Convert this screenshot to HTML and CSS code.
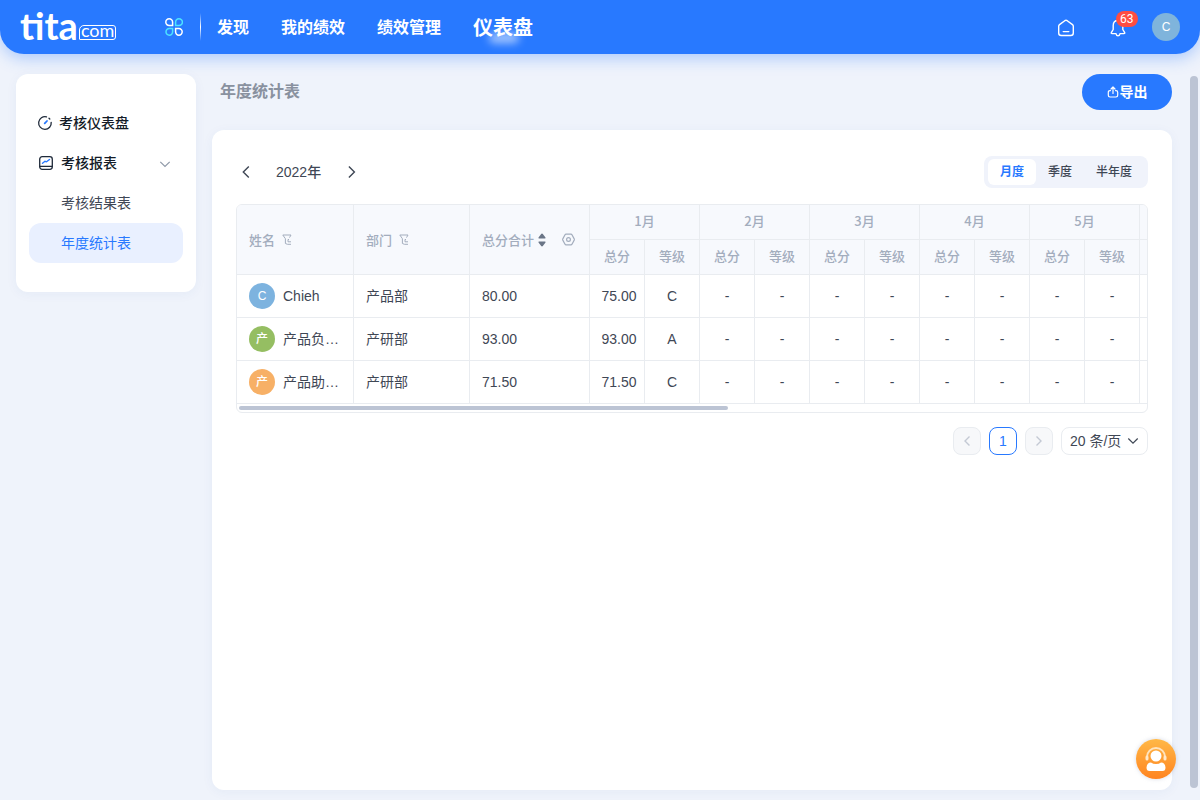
FILE: index.html
```html
<!DOCTYPE html>
<html lang="zh-CN">
<head>
<meta charset="utf-8">
<meta name="viewport" content="width=device-width, initial-scale=1">
<title>年度统计表</title>
<link rel="stylesheet" href="styles.css">
</head>
<body>
<header class="topbar">
  <a class="logo" href="#"><span class="logo-name">tita</span><span class="logo-suffix">com</span></a>
  <button class="icon-button apps" aria-label="应用">
    <svg width="18" height="18" viewBox="0 0 18 18" fill="none" stroke-width="1.5">
      <path stroke="#fff" d="M7.6 7.6H4.3A3.4 3.4 0 1 1 7.6 4.2z"/>
      <path stroke="#4de3ff" d="M10.6 7.6V4.3A3.4 3.4 0 1 1 14 7.600z"/>
      <path stroke="#4de3ff" d="M7.6 10.6v3.2A3.3 3.3 0 1 1 4.3 10.6z"/>
      <path stroke="#fff" d="M10.6 10.6h3.2a3.3 3.3 0 1 1-3.2 3.2z"/>
    </svg>
  </button>
  <span class="divider"></span>
  <nav class="nav">
    <a href="#">发现</a>
    <a href="#">我的绩效</a>
    <a href="#">绩效管理</a>
    <a class="current" href="#">仪表盘</a>
  </nav>
  <div class="tools">
    <button class="icon-button" aria-label="首页">
      <svg width="18" height="18" viewBox="0 0 18 18" fill="none" stroke="#fff" stroke-width="1.4" stroke-linecap="round" stroke-linejoin="round"><path d="M1.7 7.2Q1.7 6.2 2.5 5.6L7.8 1.7Q9 .9 10.2 1.7L15.500 5.600Q16.300 6.200 16.300 7.200V14Q16.300 16.500 13.800 16.500H4.200Q1.700 16.500 1.700 14zM6.200 12.600H11.800"/></svg>
    </button>
    <button class="icon-button bell" aria-label="通知">
      <svg width="18" height="18" viewBox="0 0 18 18" fill="none" stroke="#fff" stroke-width="1.4" stroke-linecap="round" stroke-linejoin="round"><path d="M9 1.500C5.800 1.500 4.200 3.900 4.200 6.500V10.500L2.300 13.700Q2 14.600 3 14.600H7Q7.300 16.700 9 16.700T11 14.600H15Q16 14.600 15.700 13.700L13.800 10.500V6.500C13.800 3.900 12.200 1.500 9 1.500z"/></svg>
      <span class="badge">63</span>
    </button>
    <button class="avatar avatar-user" aria-label="C">C</button>
  </div>
</header>

<div class="layout">
  <aside class="sidebar">
    <a class="side-item" href="#">
      <svg width="16" height="16" viewBox="0 0 16 16" fill="none" stroke="#1f2a3a" stroke-width="1.3" stroke-linecap="round"><path d="M9.500 1.900A6.300 6.300 0 1 0 14.200 7.300M12 3.200l.8.800"/><path stroke="#2879ff" stroke-width="1.800" d="M7.700 8.400L10 6"/></svg>
      考核仪表盘
    </a>
    <a class="side-item report" href="#">
      <svg width="16" height="16" viewBox="0 0 16 16" fill="none" stroke="#1f2a3a" stroke-width="1.300" stroke-linecap="round"><rect x="1.700" y="1.700" width="12.600" height="12.600" rx="2.500"/><path d="M2 11.300H14"/><path stroke="#2879ff" stroke-width="1.400" d="M4.500 8.300L7 6.300L8.500 6.800L11.500 4.500"/></svg>
      <span class="side-label">考核报表</span>
      <svg class="fold" width="12" height="12" viewBox="0 0 12 12" fill="none" stroke="#8f99a8" stroke-width="1.200"><path d="M1.300 4.800L6 9.500L10.700 4.800"/></svg>
    </a>
    <a class="side-item sub" href="#">考核结果表</a>
    <a class="side-item sub active" href="#">年度统计表</a>
  </aside>

  <main class="main">
    <div class="page-head">
      <h1>年度统计表</h1>
      <button class="export">
        <svg width="12" height="12" viewBox="0 0 12 12" fill="none" stroke="#fff" stroke-width="1.200" stroke-linecap="round" stroke-linejoin="round"><path d="M3.500 4.600H3Q1.300 4.600 1.300 6.300V9.300Q1.300 11 3 11H9Q10.700 11 10.700 9.300V6.300Q10.700 4.600 9 4.600H8.500M6 7.500V1.300M4 3L6 1L8 3"/></svg>导出
      </button>
    </div>

    <section class="card">
      <div class="controls">
        <div class="year">
          <button class="icon-button" aria-label="上一年"><svg width="12" height="16" viewBox="0 0 12 16" fill="none" stroke="#3f4755" stroke-width="1.400"><path d="M8.800 2.500L3.300 8L8.800 13.500"/></svg></button>
          <span>2022年</span>
          <button class="icon-button" aria-label="下一年"><svg width="12" height="16" viewBox="0 0 12 16" fill="none" stroke="#3f4755" stroke-width="1.400"><path d="M3.900 2.500L9.400 8L3.900 13.500"/></svg></button>
        </div>
        <div class="segment">
          <button class="on">月度</button>
          <button>季度</button>
          <button>半年度</button>
        </div>
      </div>

      <div class="table-box">
        <table>
          <colgroup>
            <col class="c-name"><col class="c-dept"><col class="c-total">
            <col class="c-num"><col class="c-num"><col class="c-num"><col class="c-num"><col class="c-num">
            <col class="c-num"><col class="c-num"><col class="c-num"><col class="c-num"><col class="c-num">
            <col>
          </colgroup>
          <thead>
            <tr>
              <th class="left" rowspan="2"><span class="th-in">姓名 <svg width="10" height="11" viewBox="0 0 10 11" fill="none" stroke="#a3adbd"><path d="M7.500 3.600L9 1H.8L3.400 4.700V9.500L5.500 10.300H9M7 5.500H6V7.800H9"/></svg></span></th>
              <th class="left" rowspan="2"><span class="th-in">部门 <svg width="10" height="11" viewBox="0 0 10 11" fill="none" stroke="#a3adbd"><path d="M7.500 3.600L9 1H.8L3.400 4.700V9.500L5.500 10.300H9M7 5.500H6V7.800H9"/></svg></span></th>
              <th class="left" rowspan="2"><span class="th-in tight">总分合计 <svg width="8" height="14" viewBox="0 0 8 14" fill="#6b7687"><path d="M4 .5Q4.500.5 5 1.200L7.500 4.500Q7.800 5.500 7 5.500H1Q.2 5.500.5 4.500L3 1.200Q3.500.5 4 .5zM4 13.500Q4.500 13.500 5 12.800L7.500 9.500Q7.800 8.500 7 8.500H1Q.2 8.500.5 9.500L3 12.800Q3.500 13.500 4 13.500z"/></svg><svg class="gear" width="13" height="13" viewBox="0 0 13 13" fill="none" stroke="#a3adbd" stroke-width="1.200"><path d="M4 1.200H9Q9.600 1.200 10 1.800L12.200 5.900Q12.500 6.500 12.200 7.100L10 11.200Q9.600 11.800 9 11.800H4Q3.400 11.800 3 11.200L.8 7.100Q.5 6.500.8 5.900L3 1.800Q3.400 1.200 4 1.200z"/><circle cx="6.500" cy="6.500" r="1.900"/></svg></span></th>
              <th colspan="2">1月</th><th colspan="2">2月</th><th colspan="2">3月</th><th colspan="2">4月</th><th colspan="2">5月</th><th></th>
            </tr>
            <tr>
              <th>总分</th><th>等级</th><th>总分</th><th>等级</th><th>总分</th><th>等级</th><th>总分</th><th>等级</th><th>总分</th><th>等级</th><th></th>
            </tr>
          </thead>
          <tbody>
            <tr>
              <td class="left"><div class="person"><span class="avatar blue">C</span><span class="name">Chieh</span></div></td>
              <td class="left">产品部</td><td class="left">80.00</td><td class="score">75.00</td><td>C</td>
              <td>-</td><td>-</td><td>-</td><td>-</td><td>-</td><td>-</td><td>-</td><td>-</td><td></td>
            </tr>
            <tr>
              <td class="left"><div class="person"><span class="avatar green">产</span><span class="name">产品负…</span></div></td>
              <td class="left">产研部</td><td class="left">93.00</td><td class="score">93.00</td><td>A</td>
              <td>-</td><td>-</td><td>-</td><td>-</td><td>-</td><td>-</td><td>-</td><td>-</td><td></td>
            </tr>
            <tr>
              <td class="left"><div class="person"><span class="avatar orange">产</span><span class="name">产品助…</span></div></td>
              <td class="left">产研部</td><td class="left">71.50</td><td class="score">71.50</td><td>C</td>
              <td>-</td><td>-</td><td>-</td><td>-</td><td>-</td><td>-</td><td>-</td><td>-</td><td></td>
            </tr>
          </tbody>
        </table>
        <div class="h-scroll"><div class="h-thumb"></div></div>
      </div>

      <div class="pager">
        <button class="page-button off" aria-label="上一页" disabled><svg width="10" height="12" viewBox="0 0 10 12" fill="none" stroke="#c3c9d4" stroke-width="1.400"><path d="M7.500 1.500L3 6L7.500 10.500"/></svg></button>
        <button class="page-button here">1</button>
        <button class="page-button off" aria-label="下一页" disabled><svg width="10" height="12" viewBox="0 0 10 12" fill="none" stroke="#c3c9d4" stroke-width="1.400"><path d="M2.500 1.500L7 6L2.500 10.500"/></svg></button>
        <div class="size">
          <select aria-label="每页条数"><option>20 条/页</option></select>
          <svg width="12" height="12" viewBox="0 0 12 12" fill="none" stroke="#3f4755" stroke-width="1.200"><path d="M1.300 3.500L6 8.200L10.700 3.500"/></svg>
        </div>
      </div>
    </section>
  </main>
  <div class="v-scroll"></div>
</div>

<button class="support" aria-label="客服">
  <svg width="26" height="26" viewBox="0 0 26 26">
    <path d="M4 12V11a9 9 0 0 1 18 0v1" fill="none" stroke="#ffe3bd" stroke-width="2"/>
    <rect x="2.500" y="9.500" width="3" height="5" rx="1.500" fill="#ffe9cc"/><rect x="20.500" y="9.500" width="3" height="5" rx="1.500" fill="#ffe9cc"/>
    <circle cx="13" cy="10" r="5.500" fill="#fff"/>
    <path d="M3.500 21.500Q4 16.500 8 16.500Q10 18 13 18T18 16.500Q22 16.500 22.500 21.500Q22.500 25 19.500 25H6.500Q3.500 25 3.500 21.500z" fill="#fff"/>
  </svg>
</button>
</body>
</html>
```
FILE: styles.css
```css
* { box-sizing: border-box; }

body {
  margin: 0;
  height: 100vh;
  display: flex;
  flex-direction: column;
  overflow: hidden;
  background: #eff3fb;
  color: #3f4755;
  font: 14px/20px "Liberation Sans", "Noto Sans CJK SC", sans-serif;
}

a { color: inherit; text-decoration: none; }
button, select { font: inherit; color: inherit; border: 0; margin: 0; padding: 0; background: none; }
svg { display: block; flex: none; }
.icon-button { display: flex; align-items: center; justify-content: center; }

.topbar {
  display: flex;
  align-items: center;
  flex: none;
  height: 54px;
  padding: 0 20px;
  background: #2879ff;
  color: #fff;
  border-radius: 0 0 24px 24px;
  box-shadow: 0 4px 16px rgba(40, 121, 255, .35);
}
.logo { display: flex; align-items: flex-end; width: 98px; padding-bottom: 4px; font-variant-ligatures: none; }
.logo-name { font: bold 38px/38px Lato, sans-serif; }
.logo-suffix {
  margin: 0 0 4px 1px;
  padding: 0 1px 4px;
  border: 1px solid #fff;
  border-radius: 5px 3px 3px 1px;
  font: 18px/9px Lato, sans-serif;
}
.apps { margin-left: 47px; }
.divider { width: 1px; height: 28px; margin: 0 16px 0 17px; background: linear-gradient(transparent, #fff, transparent); }
.nav { display: flex; align-items: center; gap: 32px; padding-top: 2px; font-size: 16px; font-weight: bold; line-height: 24px; }
.current { position: relative; font-size: 20px; }
.current::after {
  content: "";
  position: absolute;
  left: 16px;
  right: 14px;
  bottom: -3px;
  height: 10px;
  border-radius: 5px;
  background: rgba(255, 255, 255, .6);
  filter: blur(4px);
}
.tools { display: flex; align-items: center; gap: 26px; margin-left: auto; }
.tools .icon-button { width: 26px; height: 28px; padding-top: 2px; }
.bell { position: relative; margin-right: -5px; }
.badge {
  position: absolute;
  left: 11px;
  top: -2px;
  padding: 0 4px;
  border-radius: 8px;
  background: #ff4d42;
  font: 12px/16px Roboto, sans-serif;
}
.avatar {
  display: flex;
  align-items: center;
  justify-content: center;
  flex: none;
  width: 26px;
  height: 26px;
  border-radius: 50%;
  color: #fff;
  font-size: 12px;
  font-weight: 500;
  font-family: "Liberation Sans", "Noto Sans CJK SC", sans-serif;
}
.avatar-user { width: 28px; height: 28px; background: #7fb4dc; }
.blue { background: #7db3df; }
.green { background: #95be62; }
.orange { background: #f7b066; }

.layout { display: flex; flex: 1; min-height: 0; padding: 20px 2px 10px 16px; }
.sidebar {
  align-self: flex-start;
  flex: none;
  width: 180px;
  padding: 29px 13px;
  border-radius: 12px;
  background: #fff;
  box-shadow: 0 2px 12px rgba(40, 80, 160, .05);
}
.side-item {
  display: flex;
  align-items: center;
  gap: 6px;
  height: 40px;
  padding: 0 12px 0 8px;
  border-radius: 12px;
  color: #141c28;
  font-weight: 500;
}
.report { padding-left: 9px; gap: 7px; }
.side-label { flex: 1; }
.sub { padding-left: 32px; color: #3f4755; font-weight: 400; }
.active { background: #e9f0ff; color: #2879ff; }

.main { display: flex; flex-direction: column; flex: 1; min-width: 0; margin: 0 18px 0 16px; }
.page-head { display: flex; align-items: center; justify-content: space-between; padding-left: 8px; }
h1 { margin: 0; color: #89919f; font-size: 16px; font-weight: bold; line-height: 24px; }
.export {
  display: flex;
  align-items: center;
  justify-content: center;
  gap: 1px;
  width: 90px;
  height: 36px;
  border-radius: 18px;
  background: #2879ff;
  color: #fff;
  font-weight: bold;
}
.card {
  flex: 1;
  margin-top: 20px;
  padding: 26px 24px;
  border-radius: 12px;
  background: #fff;
  box-shadow: 0 2px 12px rgba(40, 80, 160, .05);
}
.controls { display: flex; align-items: center; justify-content: space-between; }
.year { display: flex; align-items: center; gap: 24px; padding-left: 4px; font-weight: 500; }
.segment { display: flex; padding: 3px 4px; border-radius: 8px; background: #f0f3fb; font-size: 12px; font-weight: 500; }
.segment button { height: 26px; padding: 0 12px; border-radius: 6px; }
.segment .on { background: #fff; color: #2879ff; font-weight: bold; }

.table-box { margin-top: 16px; overflow: hidden; border: 1px solid #e9ecf0; border-radius: 6px; }
table { width: 100%; table-layout: fixed; border-spacing: 0; }
.c-name { width: 117px; }
.c-dept { width: 116px; }
.c-total { width: 120px; }
.c-num { width: 55px; }
th, td { padding: 0; border: solid #e9ecf0; border-width: 0 1px 1px 0; text-align: center; }
th:last-child, td:last-child { border-right: 0; }
th { height: 35px; padding-bottom: 2px; background: #f7f9fd; color: #a3adbd; font: 500 13px/20px "Noto Sans CJK SC", sans-serif; }
td { height: 43px; }
.left { padding-left: 12px; padding-bottom: 0; text-align: left; }
.score { padding-left: 4px; }
.th-in { display: flex; align-items: center; gap: 7px; }
.tight { gap: 4px; }
.gear { margin: 0 14px 0 auto; }
.person { display: flex; align-items: center; gap: 8px; }
.name { overflow: hidden; white-space: nowrap; text-overflow: ellipsis; }
.h-scroll { padding: 2px; }
.h-thumb { width: 54%; height: 4px; border-radius: 2px; background: #bcc4d4; }

.pager { display: flex; justify-content: flex-end; gap: 8px; margin-top: 14px; }
.page-button {
  display: flex;
  align-items: center;
  justify-content: center;
  width: 28px;
  height: 28px;
  border: 1px solid #e9ecf0;
  border-radius: 8px;
}
.off { background: #f7f8fa; }
.here { border-color: #2879ff; color: #2879ff; }
.size { position: relative; }
.size select {
  appearance: none;
  width: 87px;
  height: 28px;
  padding: 0 8px;
  border: 1px solid #e9ecf0;
  border-radius: 8px;
  background: #fff;
}
.size svg { position: absolute; right: 9px; top: 8px; pointer-events: none; }
.v-scroll { align-self: stretch; width: 8px; margin: 2px 0; border-radius: 4px; background: #bcc4d4; }

.support {
  position: fixed;
  right: 24px;
  bottom: 21px;
  display: flex;
  align-items: center;
  justify-content: center;
  width: 40px;
  height: 40px;
  border-radius: 50%;
  background: linear-gradient(#ffb847, #ff8420);
  box-shadow: 0 0 4px rgba(150, 160, 190, .4);
}
```
